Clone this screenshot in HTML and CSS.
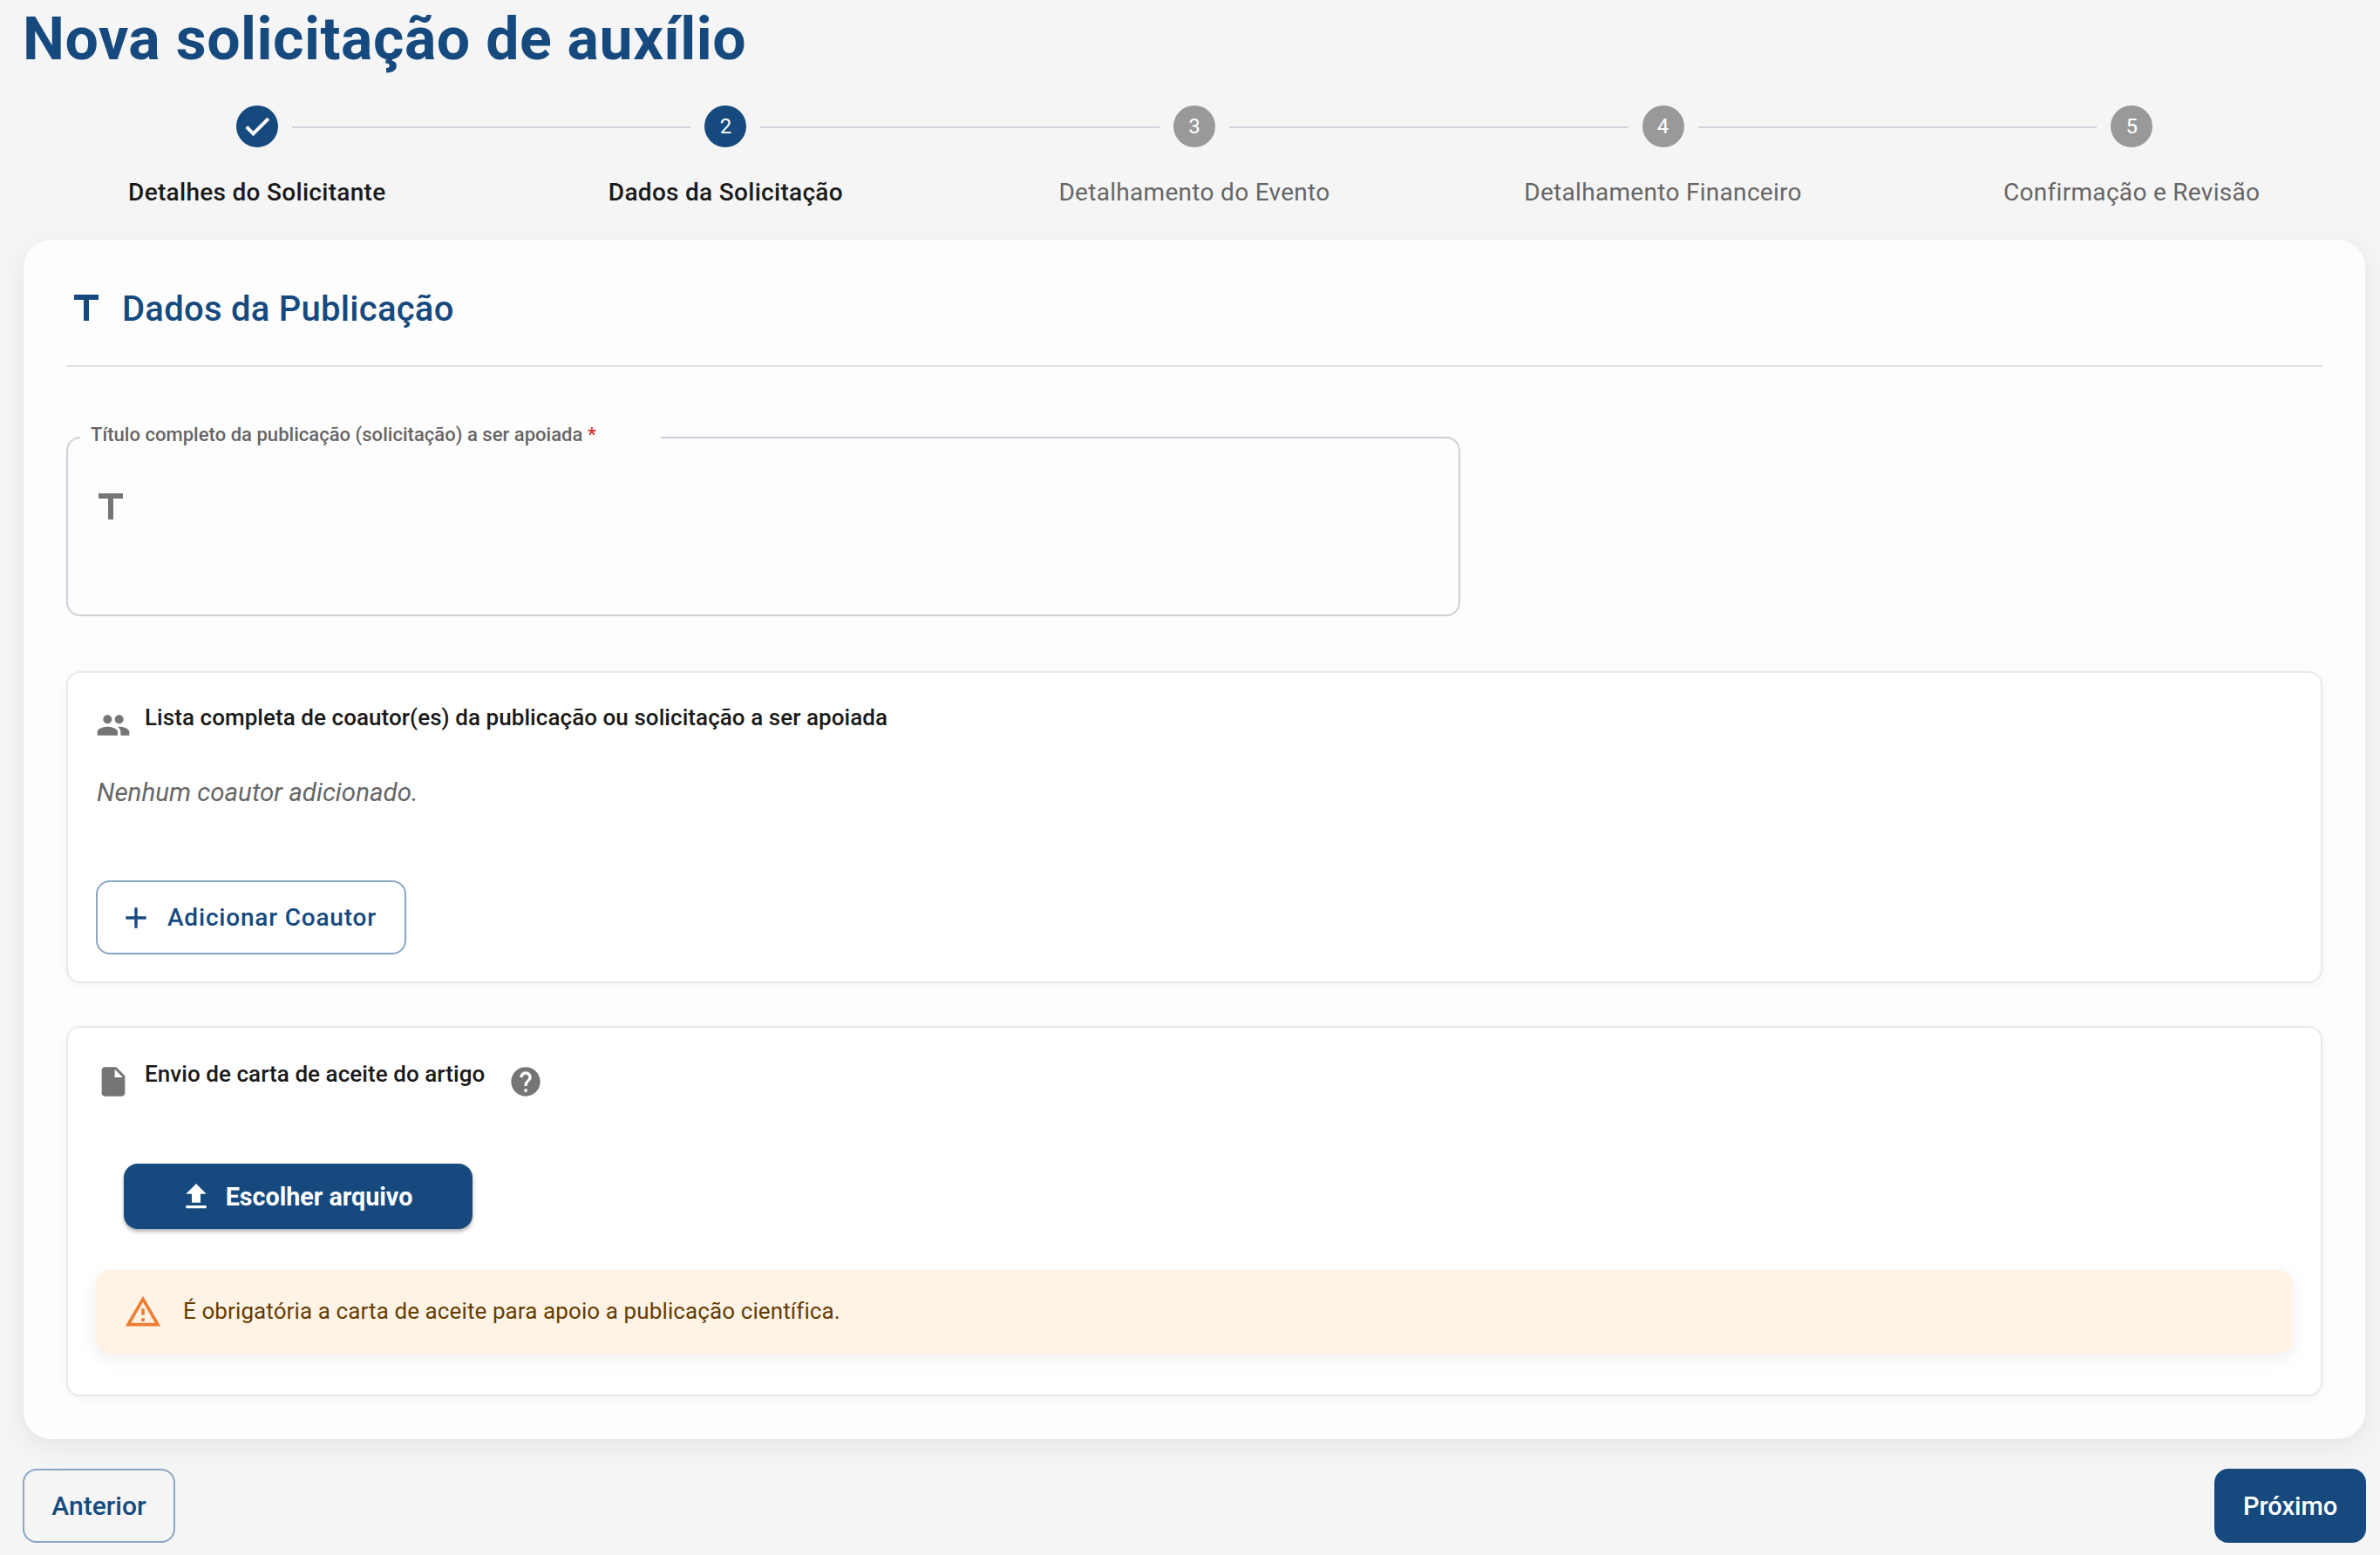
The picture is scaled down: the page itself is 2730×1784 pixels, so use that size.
FILE: index.html
```html
<!DOCTYPE html>
<html lang="pt-BR">
<head>
    <meta charset="UTF-8">
    <meta name="viewport" content="width=device-width, initial-scale=1.0">
    <title>Nova solicitação de auxílio</title>
    <link rel="stylesheet" href="styles.css">
</head>
<body>

    <h1 class="page-title">Nova solicitação de auxílio</h1>

    <div class="stepper">
        <div class="step done">
            <div class="step-circle">
                <svg class="check-icon" viewBox="0 0 24 24"><path d="M9 16.17 4.83 12l-1.42 1.41L9 19 21 7l-1.41-1.41z"/></svg>
            </div>
            <div class="step-label">Detalhes do Solicitante</div>
        </div>
        <div class="step active">
            <div class="step-circle">2</div>
            <div class="step-label">Dados da Solicitação</div>
        </div>
        <div class="step">
            <div class="step-circle">3</div>
            <div class="step-label">Detalhamento do Evento</div>
        </div>
        <div class="step">
            <div class="step-circle">4</div>
            <div class="step-label">Detalhamento Financeiro</div>
        </div>
        <div class="step">
            <div class="step-circle">5</div>
            <div class="step-label">Confirmação e Revisão</div>
        </div>
    </div>

    <div class="main-card">
        <div class="card-header">
            <svg class="header-icon" viewBox="0 0 24 24"><path d="M5 4v3h5.5v12h3V7H19V4z"/></svg>
            <h2>Dados da Publicação</h2>
        </div>

        <div class="title-field">
            <label class="field-label">Título completo da publicação (solicitação) a ser apoiada <span class="required">*</span></label>
            <svg class="field-icon" viewBox="0 0 24 24"><path d="M5 4v3h5.5v12h3V7H19V4z"/></svg>
        </div>

        <div class="section coauthors">
            <div class="section-title">
                <svg class="section-icon" viewBox="0 0 24 24"><path d="M16 11c1.66 0 2.99-1.34 2.99-3S17.66 5 16 5c-1.66 0-3 1.34-3 3s1.34 3 3 3m-8 0c1.66 0 2.99-1.34 2.99-3S9.66 5 8 5C6.34 5 5 6.34 5 8s1.34 3 3 3m0 2c-2.33 0-7 1.17-7 3.5V19h14v-2.5c0-2.33-4.67-3.5-7-3.5m8 0c-.29 0-.62.02-.97.05 1.16.84 1.97 1.97 1.97 3.45V19h6v-2.5c0-2.33-4.67-3.5-7-3.5"/></svg>
                <span>Lista completa de coautor(es) da publicação ou solicitação a ser apoiada</span>
            </div>
            <p class="empty-text">Nenhum coautor adicionado.</p>
            <button class="btn-outline btn-add" type="button">
                <svg viewBox="0 0 24 24"><path d="M19 13h-6v6h-2v-6H5v-2h6V5h2v6h6z"/></svg>
                Adicionar Coautor
            </button>
        </div>

        <div class="section letter">
            <div class="section-title">
                <svg class="section-icon" viewBox="0 0 24 24"><path d="M6 2c-1.1 0-1.99.9-1.99 2L4 20c0 1.1.89 2 1.99 2H18c1.1 0 2-.9 2-2V8l-6-6zm7 7V3.5L18.5 9z"/></svg>
                <span>Envio de carta de aceite do artigo</span>
                <svg class="help-icon" viewBox="0 0 24 24"><path d="M12 2C6.48 2 2 6.48 2 12s4.48 10 10 10 10-4.48 10-10S17.52 2 12 2m1 17h-2v-2h2zm2.07-7.75-.9.92C13.45 12.9 13 13.5 13 15h-2v-.5c0-1.1.45-2.1 1.17-2.83l1.24-1.26c.37-.36.59-.86.59-1.41 0-1.1-.9-2-2-2s-2 .9-2 2H8c0-2.21 1.79-4 4-4s4 1.79 4 4c0 .88-.36 1.68-.93 2.25"/></svg>
            </div>
            <button class="btn-upload" type="button">
                <svg viewBox="0 0 24 24"><path d="M9 16h6v-6h4l-7-7-7 7h4zm-4 2h14v2H5z"/></svg>
                Escolher arquivo
            </button>
            <div class="alert">
                <svg viewBox="0 0 24 24"><path d="M12 5.99 19.53 19H4.47zM12 2 1 21h22zm1 14h-2v2h2zm0-6h-2v4h2z"/></svg>
                <span class="alert-text">É obrigatória a carta de aceite para apoio a publicação científica.</span>
            </div>
        </div>
    </div>

    <div class="footer-nav">
        <button class="btn-outline btn-nav" type="button">Anterior</button>
        <button class="btn-next" type="button">Próximo</button>
    </div>

</body>
</html>
```

FILE: styles.css
```css
* {
    box-sizing: border-box;
}
body {
    margin: 0;
    padding: 0 16px 0 26px;
    height: 1784px;
    overflow: hidden;
    background-color: #f5f5f5;
    font-family: Roboto, "Liberation Sans", sans-serif;
    color: #1a1a1a;
}
button {
    font-family: inherit;
    cursor: pointer;
}
svg {
    fill: currentColor;
    display: block;
    flex-shrink: 0;
}

.page-title {
    margin: 0;
    height: 90px;
    font-size: 68px;
    line-height: 90px;
    font-weight: 700;
    letter-spacing: 0.52px;
    color: #164a7f;
}

/* stepper */
.stepper {
    display: grid;
    grid-template-columns: repeat(5, 1fr);
    width: 2688px;
    margin-top: 31px;
}
.step {
    position: relative;
    display: flex;
    flex-direction: column;
    align-items: center;
}
.step + .step::before {
    content: "";
    position: absolute;
    top: 24px;
    left: calc(-50% + 40px);
    right: calc(50% + 40px);
    height: 2px;
    background: #d0d5dd;
}
.step-circle {
    width: 48px;
    height: 48px;
    border-radius: 50%;
    background: #999999;
    color: #fff;
    display: flex;
    align-items: center;
    justify-content: center;
    font-size: 24px;
}
.step.done .step-circle,
.step.active .step-circle {
    background: #164a7f;
}
.check-icon {
    width: 36px;
    height: 36px;
    stroke: currentColor;
    stroke-width: 0.7;
}
.step-label {
    margin-top: 32px;
    font-size: 28px;
    line-height: 40px;
    letter-spacing: 0.3px;
    color: #666666;
}
.step.done .step-label,
.step.active .step-label {
    font-weight: 500;
    color: #1a1a1a;
}

/* main card */
.main-card {
    width: 2686px;
    height: 1376px;
    margin: 34px 0 0 1px;
    padding: 0 49px;
    background: #fdfdfd;
    border-radius: 32px;
    box-shadow: 0 8px 32px rgba(0, 0, 0, 0.07);
}
.card-header {
    display: flex;
    align-items: center;
    gap: 17px;
    height: 146px;
    border-bottom: 2px solid #e0e0e0;
    color: #164a7f;
    padding-top: 14px;
}
.header-icon {
    width: 48px;
    height: 48px;
    margin-left: -1px;
}
.card-header h2 {
    margin: 0;
    font-size: 40px;
    font-weight: 500;
    letter-spacing: 0.26px;
}

.title-field {
    position: relative;
    width: 1599px;
    height: 206px;
    margin-top: 80px;
    padding: 55px 25px;
    border: 2px solid #ccd0d8;
    border-radius: 16px;
    color: #757575;
}
.field-label {
    position: absolute;
    top: -19px;
    left: 14px;
    padding: 0 12px;
    width: 666px;
    background: #fdfdfd;
    font-size: 22px;
    line-height: 30px;
    font-weight: 500;
    letter-spacing: 0.03px;
    color: #666666;
}
.required {
    color: #d32f2f;
}
.field-icon {
    width: 48px;
    height: 48px;
}

.section {
    background: #ffffff;
    border: 2px solid #e6e9ed;
    border-radius: 16px;
    box-shadow: 0 2px 12px rgba(0, 0, 0, 0.04);
    padding: 34px 32px;
}
.coauthors {
    height: 358px;
    margin-top: 63px;
}
.letter {
    height: 425px;
    margin-top: 49px;
}
.section-title {
    display: flex;
    align-items: flex-start;
    gap: 16px;
    font-size: 26px;
    line-height: 34px;
    font-weight: 500;
    letter-spacing: 0.06px;
    color: #1a1a1a;
}
.section-icon {
    width: 40px;
    height: 40px;
    margin-top: 6px;
    color: #757575;
}
.letter .section-title {
    padding-top: 2px;
}
.help-icon {
    width: 40px;
    height: 40px;
    margin: 6px 0 0 11px;
    color: #757575;
}
.empty-text {
    margin: 37px 0 0 1px;
    font-size: 29.5px;
    line-height: 40px;
    font-style: italic;
    color: #666666;
}

.btn-outline {
    background: transparent;
    border: 2px solid #8ba5c5;
    border-radius: 16px;
    color: #164a7f;
    font-weight: 500;
}
.btn-add {
    display: flex;
    align-items: center;
    gap: 16px;
    width: 356px;
    height: 85px;
    margin-top: 81px;
    padding: 0 24px;
    font-size: 28px;
    letter-spacing: 0.8px;
    white-space: nowrap;
    background: #fff;
}
.btn-add svg {
    width: 40px;
    height: 40px;
}

.btn-upload {
    display: flex;
    align-items: center;
    justify-content: center;
    gap: 14px;
    width: 400px;
    height: 75px;
    margin: 74px 0 0 32px;
    padding: 0 6px 0 0;
    border: none;
    border-radius: 16px;
    background: #164a7f;
    color: #fff;
    font-size: 28.7px;
    font-weight: 700;
    box-shadow: 0 3px 4px rgba(0, 0, 0, 0.3);
}
.btn-upload svg {
    width: 40px;
    height: 40px;
}

.alert {
    display: flex;
    align-items: center;
    gap: 24px;
    height: 96px;
    margin-top: 47px;
    padding: 0 32px;
    border-radius: 16px;
    background: #fff3e6;
    box-shadow: 0 6px 20px rgba(0, 0, 0, 0.07);
    font-size: 26px;
    letter-spacing: 0.1px;
    color: #663c00;
}
.alert-text {
    padding-bottom: 2px;
}
.alert svg {
    width: 44px;
    height: 44px;
    color: #ed7d31;
}

.footer-nav {
    display: flex;
    justify-content: space-between;
    width: 2688px;
    margin-top: 34px;
}
.btn-nav {
    width: 175px;
    height: 85px;
    font-size: 30px;
}
.btn-next {
    width: 174px;
    height: 85px;
    border: none;
    border-radius: 16px;
    background: #164a7f;
    color: #fff;
    font-size: 29px;
    font-weight: 500;
}
```
